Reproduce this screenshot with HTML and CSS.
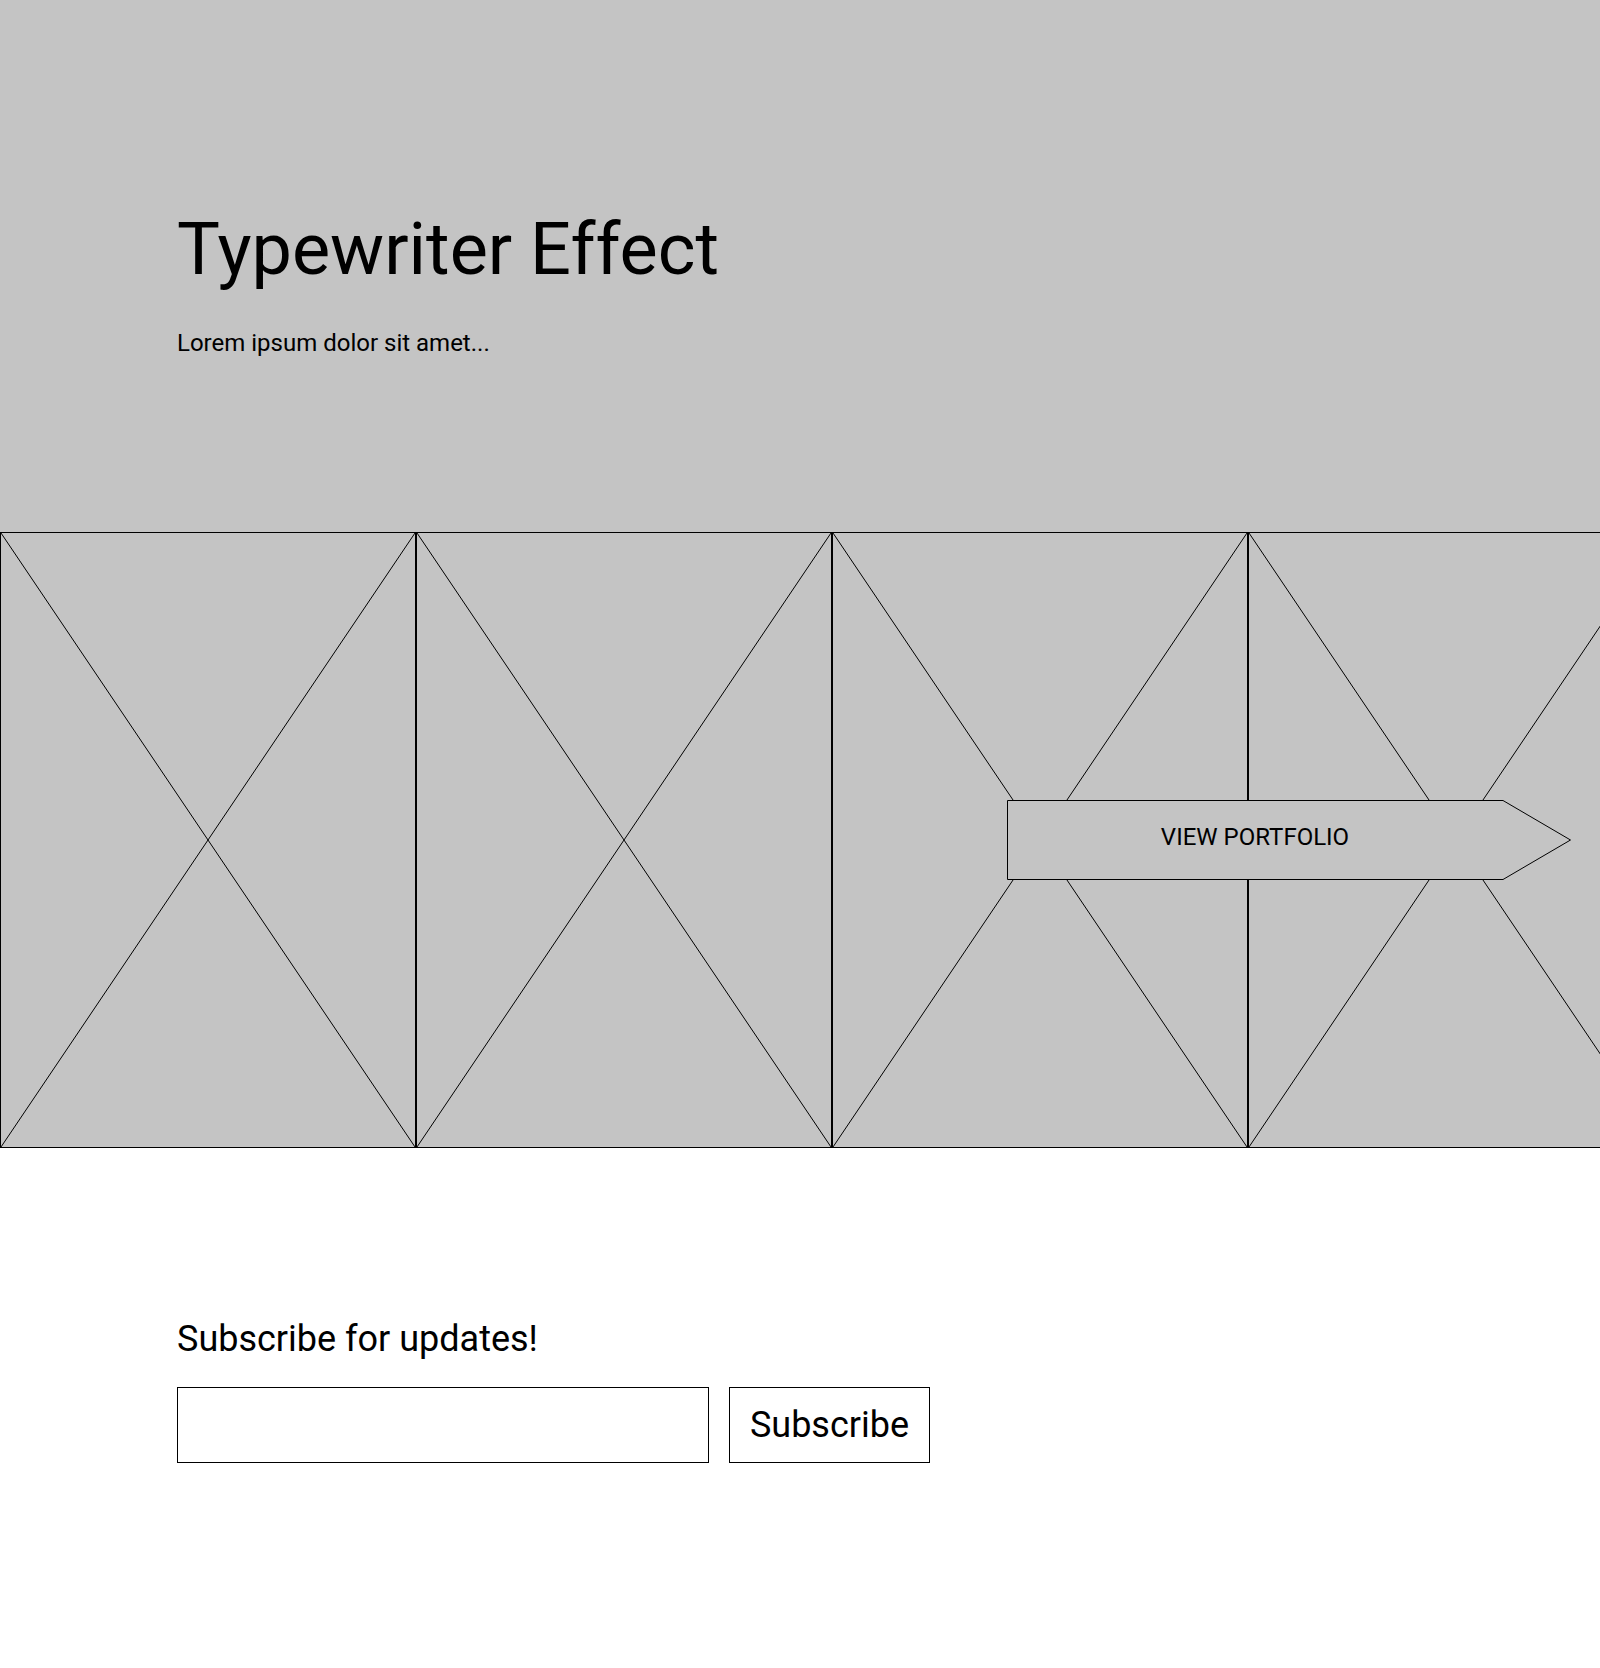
FILE: index.html
```html
<!DOCTYPE html>
<html lang="en">
<head>
<meta charset="utf-8">
<title>Typewriter Effect</title>
<link rel="stylesheet" href="styles.css">
</head>
<body>
<header class="hero">
  <h1 class="hero-title">Typewriter Effect</h1>
  <p class="hero-text">Lorem ipsum dolor sit amet...</p>
</header>

<section class="gallery">
  <div class="tiles">
    <div class="tile"><svg class="tile-x" viewBox="0 0 100 100" preserveAspectRatio="none"><line x1="0" y1="0" x2="100" y2="100" vector-effect="non-scaling-stroke"/><line x1="100" y1="0" x2="0" y2="100" vector-effect="non-scaling-stroke"/></svg></div>
    <div class="tile"><svg class="tile-x" viewBox="0 0 100 100" preserveAspectRatio="none"><line x1="0" y1="0" x2="100" y2="100" vector-effect="non-scaling-stroke"/><line x1="100" y1="0" x2="0" y2="100" vector-effect="non-scaling-stroke"/></svg></div>
    <div class="tile"><svg class="tile-x" viewBox="0 0 100 100" preserveAspectRatio="none"><line x1="0" y1="0" x2="100" y2="100" vector-effect="non-scaling-stroke"/><line x1="100" y1="0" x2="0" y2="100" vector-effect="non-scaling-stroke"/></svg></div>
    <div class="tile"><svg class="tile-x" viewBox="0 0 100 100" preserveAspectRatio="none"><line x1="0" y1="0" x2="100" y2="100" vector-effect="non-scaling-stroke"/><line x1="100" y1="0" x2="0" y2="100" vector-effect="non-scaling-stroke"/></svg></div>
  </div>
  <a class="portfolio-btn" href="#">
    <svg class="portfolio-shape" viewBox="0 0 564 80" aria-hidden="true"><polygon points="0.5,0.5 496,0.5 563.5,40 496,79.5 0.5,79.5"/></svg>
    <span class="portfolio-label">VIEW PORTFOLIO</span>
  </a>
</section>

<section class="subscribe">
  <h2 class="subscribe-title">Subscribe for updates!</h2>
  <form class="subscribe-form">
    <input class="subscribe-input" type="email" aria-label="Email">
    <button class="subscribe-btn" type="button">Subscribe</button>
  </form>
</section>
</body>
</html>
```

FILE: styles.css
```css
* { box-sizing: border-box; }

html, body {
  margin: 0;
  padding: 0;
  background: #fff;
  font-family: Roboto, "Liberation Sans", sans-serif;
  color: #000;
}

body {
  width: 1600px;
  min-height: 1668px;
  overflow: hidden;
}

.hero {
  height: 532px;
  background: #c4c4c4;
  padding: 207px 0 0 177px;
}

.hero-title {
  margin: 0;
  font-size: 72px;
  font-weight: 400;
  line-height: normal;
}

.hero-text {
  margin: 37px 0 0;
  font-size: 24px;
  line-height: normal;
}

.gallery {
  position: relative;
  height: 616px;
  overflow: hidden;
}

.tiles {
  display: flex;
  height: 100%;
}

.tile {
  flex: 0 0 416px;
  height: 100%;
  background: #c4c4c4;
  border: 1px solid #000;
}

.tile-x {
  display: block;
  width: 100%;
  height: 100%;
}

.tile-x line {
  stroke: #000;
  stroke-width: 1;
}

.portfolio-btn {
  position: absolute;
  left: 1007px;
  top: 268px;
  width: 564px;
  height: 80px;
  display: flex;
  align-items: center;
  padding-bottom: 6px;
  text-decoration: none;
  color: #000;
}

.portfolio-shape {
  position: absolute;
  inset: 0;
  width: 564px;
  height: 80px;
}

.portfolio-shape polygon {
  fill: #c4c4c4;
  stroke: #000;
  stroke-width: 1;
}

.portfolio-label {
  position: relative;
  width: 496px;
  text-align: center;
  font-size: 24px;
  line-height: normal;
}

.subscribe {
  padding: 170px 0 0 177px;
}

.subscribe-title {
  margin: 0;
  font-size: 36px;
  font-weight: 400;
  line-height: normal;
}

.subscribe-form {
  display: flex;
  gap: 20px;
  margin-top: 27px;
}

.subscribe-input {
  width: 532px;
  height: 76px;
  border: 1px solid #000;
  background: #fff;
  margin: 0;
  font-family: inherit;
  font-size: 24px;
  padding: 0 16px;
}

.subscribe-btn {
  width: 201px;
  height: 76px;
  border: 1px solid #000;
  background: #fff;
  margin: 0;
  font-family: inherit;
  font-size: 36px;
  color: #000;
  padding: 0;
}
```
